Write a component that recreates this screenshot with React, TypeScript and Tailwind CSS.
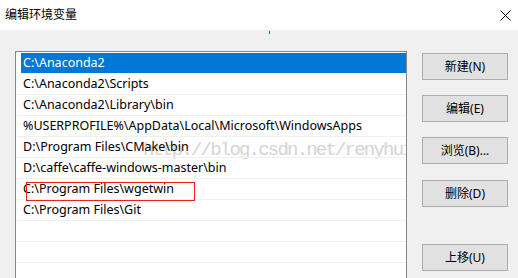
const rows = [
  "C:\\Anaconda2",
  "C:\\Anaconda2\\Scripts",
  "C:\\Anaconda2\\Library\\bin",
  "%USERPROFILE%\\AppData\\Local\\Microsoft\\WindowsApps",
  "D:\\Program Files\\CMake\\bin",
  "D:\\caffe\\caffe-windows-master\\bin",
  "C:\\Program Files\\wgetwin",
  "C:\\Program Files\\Git",
  "",
  "",
  "",
];

const font = { fontFamily: '"Noto Sans", "Noto Sans CJK SC", sans-serif' };

function Btn({ label, className }: { label: string; className?: string }) {
  return (
    <div
      className={`w-[86px] h-[27px] bg-[#e1e1e1] border border-[#adadad] flex items-center justify-center text-[12px] text-black ${className ?? ""}`}
    >
      {label}
    </div>
  );
}

export default function App() {
  return (
    <div
      className="w-[518px] h-[278px] bg-[#f0f0f0] overflow-hidden"
      style={font}
    >
      {/* title bar */}
      <div className="h-[30px] bg-white flex items-center justify-between pl-[5px] pr-[7px]">
        <span className="text-[12px] text-black">编辑环境变量</span>
        <svg width="11" height="11" viewBox="0 0 11 11" className="mt-[1px]">
          <path d="M0.5 0.5 L10.5 10.5 M10.5 0.5 L0.5 10.5" stroke="#000" strokeWidth="1" />
        </svg>
      </div>

      <div className="relative flex">
        <div className="absolute left-[269px] top-[1px] w-px h-[3px] bg-[#e02020]" />

        {/* list */}
        <div className="relative ml-[15px] mt-[21px] w-[392px] h-[260px] bg-white border border-[#828790] pt-px pl-px overflow-hidden">
          {/* watermark */}
          <div
            className="absolute left-[127px] top-[84px] text-[19px] tracking-[-1.8px] text-[#d4d4d4] whitespace-nowrap pointer-events-none"
            style={{ fontFamily: '"Liberation Mono", monospace' }}
          >
            http://blog.csdn.net/renyhui
          </div>

          {rows.map((r, i) => (
            <div
              key={i}
              className={`relative h-[21px] ${i === 0 ? "border-b border-white" : "border-b border-[#f0f0f0]"}`}
            >
              <div
                className={`h-[20px] ml-[4px] pl-[2px] flex items-center text-[12.5px] whitespace-nowrap ${
                  i === 0 ? "bg-[#0078d7] text-white" : "text-black"
                }`}
              >
                {r}
              </div>
            </div>
          ))}

          {/* red box */}
          <div className="absolute left-[10px] top-[130px] w-[169px] h-[19px] border border-[#e52222]" />
        </div>

        {/* buttons */}
        <div className="ml-[15px] mt-[23px] flex flex-col">
          <Btn label="新建(N)" />
          <Btn label="编辑(E)" className="mt-[15px]" />
          <Btn label="浏览(B)..." className="mt-[15px]" />
          <Btn label="删除(D)" className="mt-[16px]" />
          <Btn label="上移(U)" className="mt-[37px]" />
        </div>
      </div>
    </div>
  );
}
